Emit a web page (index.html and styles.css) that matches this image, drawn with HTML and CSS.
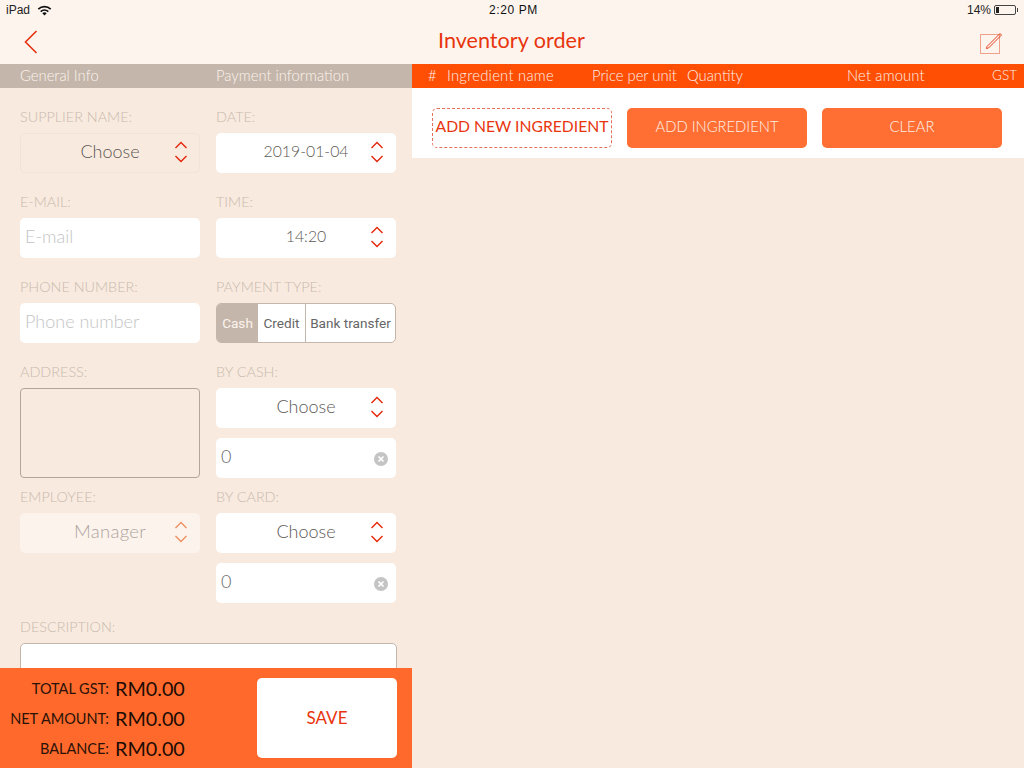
FILE: index.html
```html
<!DOCTYPE html>
<html lang="en">
<head>
<meta charset="utf-8">
<title>Inventory order</title>
<link rel="stylesheet" href="styles.css">
</head>
<body>
<div class="app">
  <header class="top">
    <div class="status">
      <div class="status-left"><span>iPad</span>
        <svg class="wifi" width="15" height="11" viewBox="0 0 15 11"><path d="M7.500 10.600 5.300 8.200a3.200 3.200 0 0 1 4.400 0z" fill="#111"/><path d="M3.700 6.600a5.600 5.600 0 0 1 7.600 0" fill="none" stroke="#111" stroke-width="1.700"/><path d="M1.300 4.100a9 9 0 0 1 12.400 0" fill="none" stroke="#111" stroke-width="1.700"/></svg>
      </div>
      <div class="status-time">2:20 PM</div>
      <div class="status-right"><span>14%</span>
        <span class="battery"><span class="battery-level"></span></span><span class="battery-tip"></span>
      </div>
    </div>
    <div class="nav">
      <svg class="back" width="14" height="24" viewBox="0 0 14 24"><path d="M12.500 1 1.500 12l11 11" fill="none" stroke="#e5300f" stroke-width="1.600"/></svg>
      <h1 class="title">Inventory order</h1>
      <svg class="edit" width="24" height="24" viewBox="0 0 24 24"><rect x="1.500" y="4.500" width="19" height="19" fill="none" stroke="#f0a18c" stroke-width="1"/><path d="M8 16.500 21 3.500l1.500 1.500L9.500 18l-2 .5z" fill="none" stroke="#e5401f" stroke-width="1"/></svg>
    </div>
  </header>
  <div class="main">
    <section class="left">
      <div class="left-head"><span class="col">General Info</span><span class="col">Payment information</span></div>
      <div class="form">
        <div class="columns">
          <div class="col">
            <div class="label">SUPPLIER NAME:</div>
            <div class="field select ghost"><span class="value">Choose</span>
              <svg class="updown" width="14" height="22" viewBox="0 0 14 22"><path d="M1.500 7 7 1.500 12.500 7M1.500 15 7 20.500 12.500 15" fill="none" stroke="#e5260a" stroke-width="1.400"/></svg></div>
            <div class="label">E-MAIL:</div>
            <div class="field input"><span class="placeholder">E-mail</span></div>
            <div class="label">PHONE NUMBER:</div>
            <div class="field input"><span class="placeholder">Phone number</span></div>
            <div class="label">ADDRESS:</div>
            <div class="field textarea"></div>
            <div class="label label-tight">EMPLOYEE:</div>
            <div class="field select disabled"><span class="value">Manager</span>
              <svg class="updown" width="14" height="22" viewBox="0 0 14 22"><path d="M1.500 7 7 1.500 12.500 7M1.500 15 7 20.500 12.500 15" fill="none" stroke="#ef8f60" stroke-width="1.400"/></svg></div>
          </div>
          <div class="col">
            <div class="label">DATE:</div>
            <div class="field select"><span class="value value-date">2019-01-04</span>
              <svg class="updown" width="14" height="22" viewBox="0 0 14 22"><path d="M1.500 7 7 1.500 12.500 7M1.500 15 7 20.500 12.500 15" fill="none" stroke="#e5260a" stroke-width="1.400"/></svg></div>
            <div class="label">TIME:</div>
            <div class="field select"><span class="value value-date">14:20</span>
              <svg class="updown" width="14" height="22" viewBox="0 0 14 22"><path d="M1.500 7 7 1.500 12.500 7M1.500 15 7 20.500 12.500 15" fill="none" stroke="#e5260a" stroke-width="1.400"/></svg></div>
            <div class="label">PAYMENT TYPE:</div>
            <div class="segments"><span class="seg seg-on seg-cash">Cash</span><span class="seg seg-credit">Credit</span><span class="seg seg-bank">Bank transfer</span></div>
            <div class="label">BY CASH:</div>
            <div class="field select"><span class="value">Choose</span>
              <svg class="updown" width="14" height="22" viewBox="0 0 14 22"><path d="M1.500 7 7 1.500 12.500 7M1.500 15 7 20.500 12.500 15" fill="none" stroke="#e5260a" stroke-width="1.400"/></svg></div>
            <div class="field input stacked"><span class="typed">0</span>
              <svg class="clear-x" width="14" height="14" viewBox="0 0 14 14"><circle cx="7" cy="7" r="7" fill="#c4c4c4"/><path d="M4.500 4.500l5 5m0-5l-5 5" stroke="#fff" stroke-width="1.700"/></svg></div>
            <div class="label label-tight">BY CARD:</div>
            <div class="field select"><span class="value">Choose</span>
              <svg class="updown" width="14" height="22" viewBox="0 0 14 22"><path d="M1.500 7 7 1.500 12.500 7M1.500 15 7 20.500 12.500 15" fill="none" stroke="#e5260a" stroke-width="1.400"/></svg></div>
            <div class="field input stacked"><span class="typed">0</span>
              <svg class="clear-x" width="14" height="14" viewBox="0 0 14 14"><circle cx="7" cy="7" r="7" fill="#c4c4c4"/><path d="M4.500 4.500l5 5m0-5l-5 5" stroke="#fff" stroke-width="1.700"/></svg></div>
          </div>
        </div>
        <div class="label label-desc">DESCRIPTION:</div>
        <div class="field description"></div>
      </div>
      <footer class="totals">
        <div class="sums">
          <div class="sum"><span class="sum-label">TOTAL GST:</span><span class="sum-value">RM0.00</span></div>
          <div class="sum"><span class="sum-label">NET AMOUNT:</span><span class="sum-value">RM0.00</span></div>
          <div class="sum"><span class="sum-label">BALANCE:</span><span class="sum-value">RM0.00</span></div>
        </div>
        <div class="save">SAVE</div>
      </footer>
    </section>
    <section class="right">
      <div class="table-head">
        <span class="th th-num">#</span><span class="th th-name">Ingredient name</span><span class="th th-price">Price per unit</span><span class="th th-qty">Quantity</span><span class="th th-net">Net amount</span><span class="th th-gst">GST</span>
      </div>
      <div class="actions">
        <div class="btn btn-dashed">ADD NEW INGREDIENT</div>
        <div class="btn btn-solid">ADD INGREDIENT</div>
        <div class="btn btn-solid">CLEAR</div>
      </div>
    </section>
  </div>
</div>
</body>
</html>
```
FILE: styles.css
```css
* { box-sizing: border-box; }
html, body { margin: 0; height: 100%; }
body { font-family: "Lato", "Liberation Sans", sans-serif; font-weight: 300; background: #f8eadf; color: #555; }
.app { width: 1024px; height: 768px; display: flex; flex-direction: column; overflow: hidden; }

.top { height: 64px; background: #fdf4ee; flex: none; }
.status { height: 20px; display: flex; justify-content: space-between; align-items: center; padding: 0 6px; font-family: "Liberation Sans", sans-serif; font-weight: 400; font-size: 12px; color: #222; position: relative; }
.status-left { display: flex; align-items: center; gap: 7px; }
.status-time { position: absolute; left: 489px; top: 3px; color: #111; letter-spacing: 0.6px; }
.status-right { display: flex; align-items: center; margin-left: -4px; }
.battery { width: 22px; height: 10px; border: 1px solid #444; border-radius: 2px; margin-left: 3px; padding: 1px; display: block; }
.battery-level { display: block; width: 3px; height: 6px; background: #222; }
.battery-tip { width: 1px; height: 4px; background: #444; margin-left: 1px; }
.nav { height: 44px; display: flex; align-items: center; justify-content: space-between; padding: 0 21px 0 24px; position: relative; }
.title { position: absolute; left: 438px; top: 7px; margin: 0; font-size: 21.600px; line-height: 26px; font-weight: 400; color: #e8350e; }

.main { flex: 1; display: flex; min-height: 0; }
.left { width: 412px; flex: none; display: flex; flex-direction: column; min-height: 0; }
.left-head { height: 24px; flex: none; background: #c4b6aa; color: #fdf4ee; display: flex; gap: 16px; padding: 1px 16px 0 20px; font-size: 14.800px; line-height: 20px; font-weight: 300; }
.left-head .col { width: 180px; }

.form { flex: 1; min-height: 0; overflow: hidden; padding: 0 16px 0 20px; }
.columns { display: flex; gap: 16px; }
.columns .col { width: 180px; }
.label { height: 45px; padding-top: 19px; font-size: 14.400px; line-height: 20px; color: #c9baae; }
.label-tight { height: 35px; padding-top: 9px; }
.label-desc { height: 40px; padding-top: 14px; }

.field { height: 40px; border-radius: 5px; background: #fff; display: flex; align-items: center; position: relative; font-size: 18px; }
.ghost { background: #f8eadf; border: 1px solid #f2e3d7; }
.ghost .updown { right: 11px; top: 7px; }
.disabled { background: #fcf3ed; }
.select { justify-content: center; }
.select .value { margin-top: -5px; color: #5c5855; }
.select .value-date { font-size: 15.800px; margin-top: -5px; }
.disabled.select .value { color: #aea49c; font-size: 18.500px; letter-spacing: 0.3px; }
.updown { position: absolute; right: 12px; top: 8px; }
.input { padding: 0 5px; }
.placeholder { color: #c4c4c4; margin-top: -5px; }
.typed { color: #666; margin-top: -5px; }
.stacked { margin-top: 10px; }
.textarea { height: 90px; background: #f8eadf; border: 1px solid #b3a698; border-radius: 4px; }
.clear-x { position: absolute; right: 8px; top: 14px; }

.segments { height: 40px; display: flex; border: 1px solid #c4b6aa; border-radius: 5px; overflow: hidden; background: #fff; font-family: "Roboto", sans-serif; font-weight: 400; font-size: 13.600px; color: #666; }
.seg { display: flex; align-items: center; justify-content: center; }
.seg-cash { width: 41px; }
.seg-credit { width: 48px; border-right: 1px solid #c4b6aa; }
.seg-bank { flex: 1; }
.seg-on { background: #c4b6aa; color: #fdf4ee; }

.description { height: 40px; width: 377px; border: 1px solid #c4b6aa; }

.totals { height: 100px; flex: none; background: #ff6a2c; display: flex; justify-content: space-between; align-items: center; padding: 0 15px 0 0; }
.sums { display: flex; flex-direction: column; }
.sum { height: 30px; display: flex; align-items: center; gap: 6px; }
.sum-label { width: 109px; text-align: right; font-size: 14.500px; font-weight: 400; color: #2a1208; }
.sum-value { font-size: 19.800px; font-weight: 400; color: #1c0c05; }
.save { width: 140px; height: 80px; background: #fff; border-radius: 5px; display: flex; align-items: center; justify-content: center; padding-bottom: 1px; font-size: 17px; font-weight: 400; color: #e8350e; }

.right { flex: 1; display: flex; flex-direction: column; }
.table-head { height: 24px; background: #ff4f04; color: #fdf0e8; position: relative; font-size: 14.800px; line-height: 20px; font-weight: 300; flex: none; }
.th { position: absolute; top: 1px; }
.th-num { left: 16px; }
.th-name { left: 35px; letter-spacing: 0.25px; }
.th-price { left: 180px; }
.th-qty { left: 275px; }
.th-net { left: 435px; letter-spacing: 0.15px; }
.th-gst { left: 580px; font-size: 13.500px; }
.actions { height: 70px; background: #fff; display: flex; gap: 15px; padding: 20px 22px 10px 20px; }
.btn { width: 180px; height: 40px; border-radius: 5px; display: flex; align-items: center; justify-content: center; padding-bottom: 4px; white-space: nowrap; }
.btn-dashed { border: 1px dashed #e5705c; color: #e8350e; font-size: 15.700px; font-weight: 400; padding-bottom: 5px; }
.btn-solid { background: #ff6f33; color: #fdf0e8; font-size: 14.800px; font-weight: 300; }
```
